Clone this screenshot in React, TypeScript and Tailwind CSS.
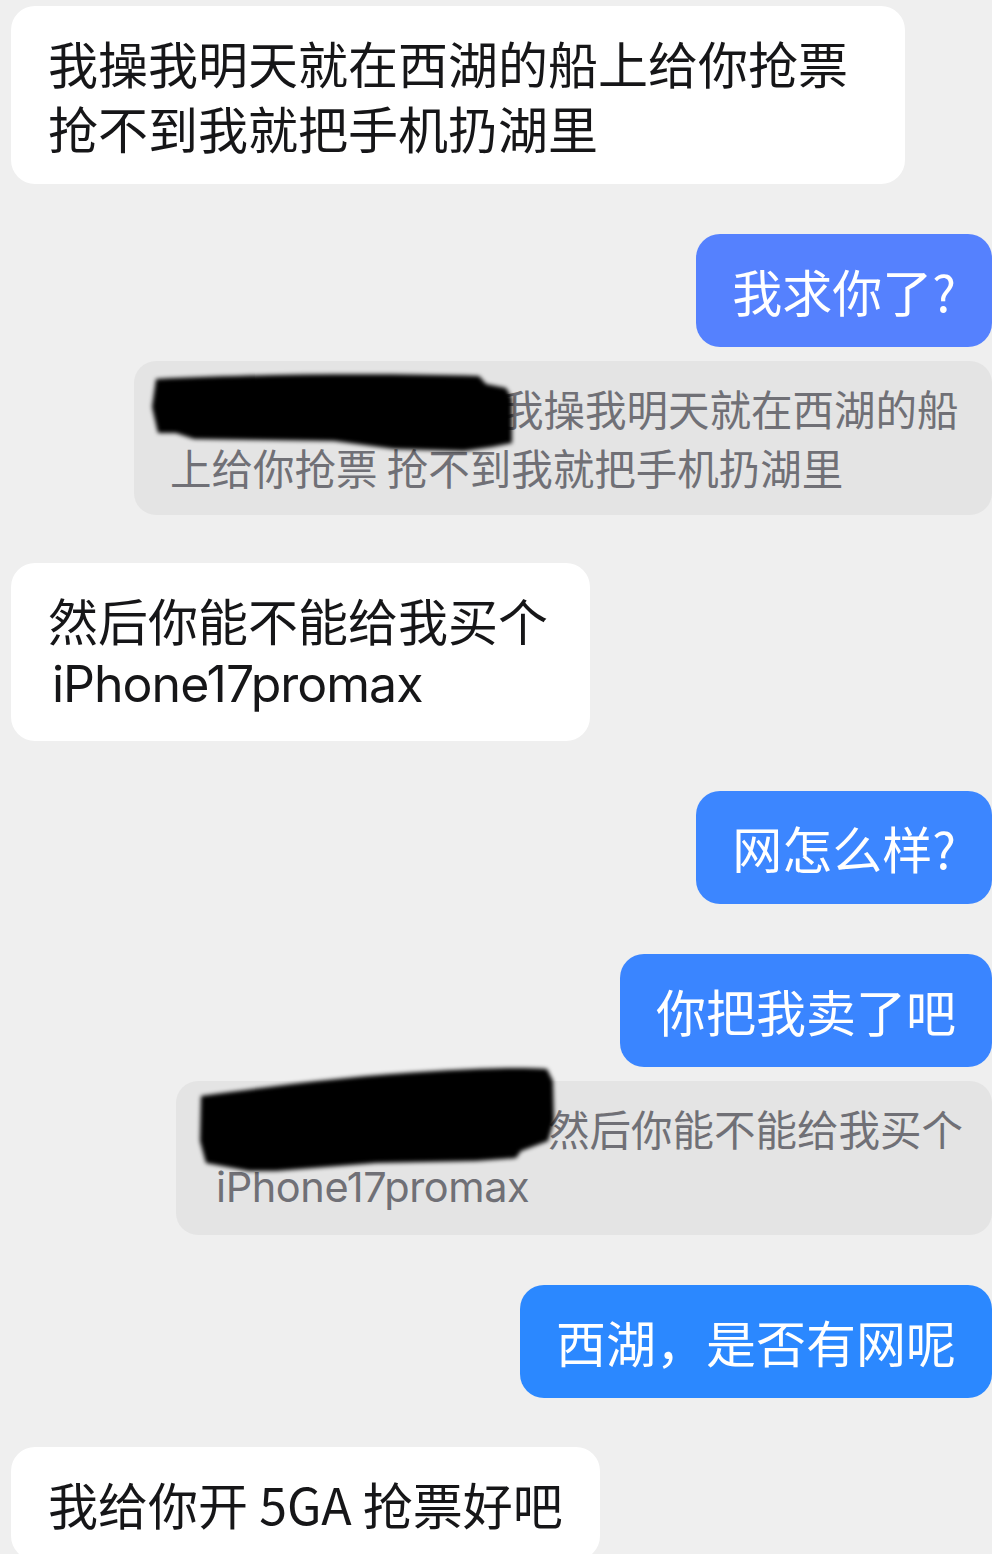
const font = { fontFamily: '"Noto Sans CJK SC", "Noto Sans", sans-serif' };
const latin = { fontFamily: 'Inter, "Noto Sans CJK SC", sans-serif' };

const Left = ({ children, className = "" }: { children: React.ReactNode; className?: string }) => (
  <div
    className={`ml-[11px] self-start rounded-[24px] bg-white px-[37px] py-[24px] text-[50px] leading-[65px] text-[#161618] ${className}`}
  >
    {children}
  </div>
);

const Right = ({ children, bg, className = "" }: { children: React.ReactNode; bg: string; className?: string }) => (
  <div
    className={`self-end rounded-[24px] px-[36px] py-[24px] text-[50px] leading-[65px] text-white whitespace-nowrap ${bg} ${className}`}
  >
    {children}
  </div>
);

// black marker scribble hiding the quoted sender's name
const Scribble = ({ id, d, className }: { id: string; d: string; className: string }) => (
  <svg className={`pointer-events-none absolute ${className}`} width="420" height="140" viewBox="0 0 420 140">
    <defs>
      <filter id={id} x="-10%" y="-20%" width="120%" height="140%">
        <feGaussianBlur stdDeviation="2.2" />
      </filter>
    </defs>
    <path d={d} fill="#050505" filter={`url(#${id})`} />
  </svg>
);

const Quote = ({
  children,
  width,
  pad,
  className = "",
}: {
  children: React.ReactNode;
  width: string;
  pad: string;
  className?: string;
}) => (
  <div
    className={`relative self-end rounded-[22px] bg-[#e4e4e4] py-[18px] text-[41.5px] leading-[59px] text-[#707076] whitespace-nowrap ${width} ${pad} ${className}`}
  >
    {children}
  </div>
);

export default function App() {
  return (
    <div className="flex h-[1554px] w-[992px] flex-col overflow-hidden bg-[#efefef] pt-[6px]" style={font}>
      <Left className="w-[894px]">
        <div>我操我明天就在西湖的船上给你抢票</div>
        <div>抢不到我就把手机扔湖里</div>
      </Left>

      <Right bg="bg-[#5581fe]" className="mt-[50px]">
        我求你了?
      </Right>

      <Quote className="mt-[14px]" width="w-[858px]" pad="pl-[36px]">
        <div>某某某某某某某：我操我明天就在西湖的船</div>
        <div>上给你抢票 抢不到我就把手机扔湖里</div>
        <Scribble
          id="s1"
          className="left-0 top-0"
          d="M22 18 C120 13 250 12 345 15 L352 23 L372 27 L378 37 L378 82 L358 86 L330 90 L260 88 L200 80 L60 78 L42 72 L24 72 L18 46 Z"
        />
      </Quote>

      <Left className="mt-[48px] pr-[42px]">
        <div>然后你能不能给我买个</div>
        <div className="pl-[4px] tracking-[-0.02em]" style={latin}>
          iPhone17promax
        </div>
      </Left>

      <Right bg="bg-[#3c86ff]" className="mt-[50px]">
        网怎么样?
      </Right>

      <Right bg="bg-[#3a85ff]" className="mt-[50px]">
        你把我卖了吧
      </Right>

      <Quote className="mt-[14px]" width="w-[816px]" pad="pl-[40px]">
        <div>某某某某的左约：然后你能不能给我买个</div>
        <div className="tracking-[-0.01em]" style={latin}>
          iPhone17promax
        </div>
        <Scribble
          id="s2"
          className="left-0 top-[-30px]"
          d="M25 45 C90 36 180 24 260 20 C310 17 345 16 371 18 L377 30 L378 70 L372 90 L345 100 L340 107 L300 110 L200 112 L100 120 L73 120 L30 112 L24 90 Z"
        />
      </Quote>

      <Right bg="bg-[#2b88ff]" className="mt-[50px]">
        西湖，是否有网呢
      </Right>

      <Left className="mt-[49px] whitespace-nowrap">我给你开 5GA 抢票好吧</Left>
    </div>
  );
}
